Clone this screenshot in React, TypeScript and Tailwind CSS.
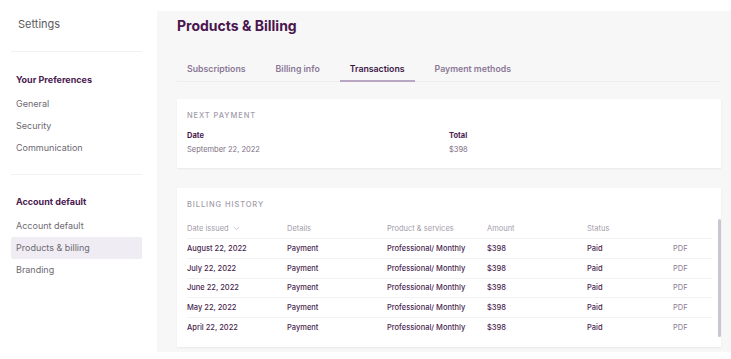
import { ChevronDown } from "lucide-react";

const rows = [
  "August 22, 2022",
  "July 22, 2022",
  "June 22, 2022",
  "May 22, 2022",
  "April 22, 2022",
];

function SideItem({ label, active }: { label: string; active?: boolean }) {
  return (
    <div
      className={`h-[22px] flex items-center px-[5px] rounded-[2px] text-[9px] text-[#6e6a72] ${
        active ? "bg-[#efedf3]" : ""
      }`}
    >
      {label}
    </div>
  );
}

export default function App() {
  return (
    <div className="flex h-screen w-full bg-white font-['Inter',sans-serif] overflow-hidden">
      {/* sidebar */}
      <div className="w-[157px] shrink-0 pl-[11px] pr-[15px]">
        <div className="pt-[16px] pl-[7px] h-[51px] text-[11px] text-[#5c5a60]">Settings</div>
        <div className="border-t border-[#f1f0f3]" />
        <div className="pt-[21px] pb-[15px]">
          <div className="pl-[5px] h-[14px] text-[9px] font-bold text-[#4a1a50] mb-[6px]">Your Preferences</div>
          <SideItem label="General" />
          <SideItem label="Security" />
          <SideItem label="Communication" />
        </div>
        <div className="border-t border-[#f1f0f3]" />
        <div className="pt-[20px]">
          <div className="pl-[5px] h-[14px] text-[9px] font-bold text-[#4a1a50] mb-[6px]">Account default</div>
          <SideItem label="Account default" />
          <SideItem label="Products & billing" active />
          <SideItem label="Branding" />
        </div>
      </div>

      {/* main */}
      <div className="flex-1 mt-[11px] mb-[7px] bg-[#f7f7f8] pl-[20px] pr-[10px]">
        <div className="pt-[4px] h-[40px] text-[14px] font-bold text-[#4a154f]">Products & Billing</div>

        <div className="flex gap-[10px] border-b border-[#ededf0] mt-[6px]">
          {["Subscriptions", "Billing info", "Transactions", "Payment methods"].map((t) => (
            <div
              key={t}
              className={`px-[10px] h-[25px] pt-[2px] flex items-center text-[8.75px] font-semibold border-b-2 -mb-px ${
                t === "Transactions"
                  ? "text-[#3d1744] border-[#b9a5c4]"
                  : "text-[#8b7896] border-transparent"
              }`}
            >
              {t}
            </div>
          ))}
        </div>

        {/* next payment */}
        <div className="mt-[17px] bg-white shadow-[0_1px_2px_rgba(0,0,0,0.06)] h-[69px] px-[10px] pt-[11px]">
          <div className="text-[7.5px] tracking-[0.12em] font-medium text-[#a39caa] h-[12px]">NEXT PAYMENT</div>
          <div className="grid grid-cols-2 mt-[8px]">
            <div>
              <div className="text-[7.5px] font-bold text-[#4a1a50]">Date</div>
              <div className="text-[7.5px] text-[#7d6e84] mt-[3px]">September 22, 2022</div>
            </div>
            <div>
              <div className="text-[7.5px] font-bold text-[#4a1a50]">Total</div>
              <div className="text-[7.5px] text-[#7d6e84] mt-[3px]">$398</div>
            </div>
          </div>
        </div>

        {/* billing history */}
        <div className="relative mt-[20px] bg-white shadow-[0_1px_2px_rgba(0,0,0,0.06)] h-[159px] pl-[10px] pr-[9px] pt-[11px]">
          <div className="text-[7.5px] tracking-[0.12em] font-medium text-[#a39caa] h-[12px]">BILLING HISTORY</div>
          <div className="mt-[8px] flex h-[20px] items-center border-b border-[#f1f0f3] text-[7.5px] text-[#a39caa]">
            <div className="w-[100px] flex items-center gap-[3px]">
              Date issued <ChevronDown size={9} strokeWidth={1.5} />
            </div>
            <div className="w-[100px]">Details</div>
            <div className="w-[100px]">Product & services</div>
            <div className="w-[100px]">Amount</div>
            <div className="w-[86px]">Status</div>
            <div />
          </div>
          {rows.map((d, i) => (
            <div
              key={d}
              className={`flex h-[19.75px] items-center text-[7.5px] font-medium text-[#4a1f50] ${
                i < rows.length - 1 ? "border-b border-[#f3f2f5]" : ""
              }`}
            >
              <div className="w-[100px]">{d}</div>
              <div className="w-[100px]">Payment</div>
              <div className="w-[100px]">Professional/ Monthly</div>
              <div className="w-[100px]">$398</div>
              <div className="w-[86px]">Paid</div>
              <div className="font-normal text-[#8e7b96]">PDF</div>
            </div>
          ))}
          <div className="absolute right-0 top-[31px] w-[3px] h-[118px] rounded-full bg-[#cbc5d3]" />
        </div>
      </div>
    </div>
  );
}
